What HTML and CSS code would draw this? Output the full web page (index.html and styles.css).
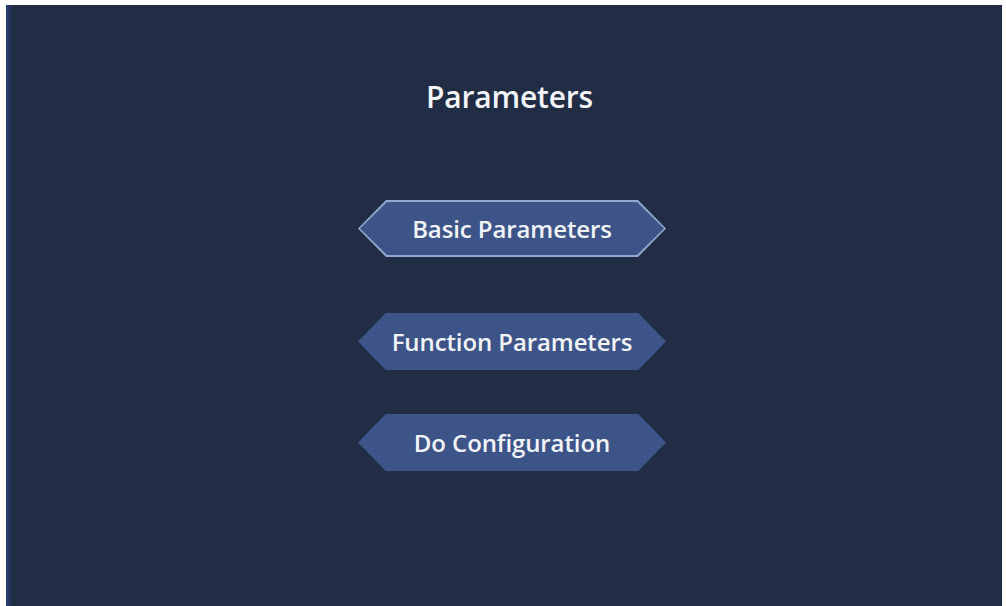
FILE: index.html
```html
<!DOCTYPE html>
<html>
<head>
<meta charset="utf-8">
<link rel="stylesheet" href="styles.css">
</head>
<body>
<main class="panel">
  <h1 class="title">Parameters</h1>
  <nav class="menu">
    <a class="hex hex-active"><span class="hex-inner">Basic Parameters</span></a>
    <a class="hex hex-second"><span class="hex-inner">Function Parameters</span></a>
    <a class="hex hex-third"><span class="hex-inner">Do Configuration</span></a>
  </nav>
</main>
</body>
</html>
```

FILE: styles.css
```css
html, body {
  margin: 0;
  padding: 0;
  background: #ffffff;
}
body {
  width: 1006px;
  height: 606px;
  overflow: hidden;
  font-family: "Open Sans", "Noto Sans", sans-serif;
}
.panel {
  margin: 5px 4px 0 6px;
  height: 601px;
  background:
    linear-gradient(to right, #24397a 0px, #2a3a6a 2px, #232f52 5px, #212c45 7px, #212c45 100%);
  display: flex;
  flex-direction: column;
  align-items: center;
  box-sizing: border-box;
  padding-top: 72px;
}
.title {
  margin: 0 0 0 11px;
  color: #f4f6fa;
  font-size: 30px;
  font-weight: 600;
  line-height: 40px;
  letter-spacing: -0.2px;
}
.menu {
  margin-top: 83px;
  display: flex;
  flex-direction: column;
  align-items: center;
  margin-left: 16px;
}
.hex {
  display: block;
  width: 308px;
  height: 57px;
  box-sizing: border-box;
  clip-path: polygon(28px 0, calc(100% - 28px) 0, 100% 50%, calc(100% - 28px) 100%, 28px 100%, 0 50%);
  background: #3d5488;
}
.hex-active {
  background: #93a9d2;
  padding: 2px;
}
.hex-second { margin-top: 56px; }
.hex-third { margin-top: 44px; }
.hex-inner {
  display: flex;
  align-items: center;
  justify-content: center;
  width: 100%;
  height: 100%;
  background: #3d5488;
  color: #f2f4f8;
  font-size: 24px;
  font-weight: 600;
  letter-spacing: -0.1px;
  clip-path: polygon(27px 0, calc(100% - 27px) 0, 100% 50%, calc(100% - 27px) 100%, 27px 100%, 0 50%);
}
```
